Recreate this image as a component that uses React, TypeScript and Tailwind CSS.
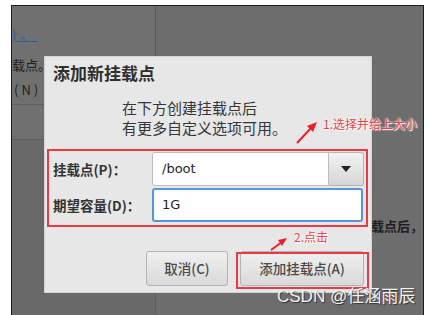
import React from "react";

const ui = { fontFamily: '"DejaVu Sans","Noto Sans CJK SC",sans-serif' };
const cjk = { fontFamily: '"Noto Sans CJK SC","DejaVu Sans",sans-serif' };

export default function App() {
  return (
    <div className="w-[430px] h-[315px] bg-white pt-[5px] pl-[11px] overflow-hidden" style={ui}>
      <div className="relative w-[413px] h-[310px] border-l border-t border-r border-[#1c1c1c] bg-[#6d6d6d] overflow-hidden flex">
        {/* left background column */}
        <div className="w-[146px] h-full border-r border-[#5b5b5b] bg-[#707070] flex flex-col">
          <div className="h-[99px] border-b border-[#5e5e5e] flex flex-col items-start text-[13px] leading-[18px] text-[#1f1f1f]" style={cjk}>
            <div className="mt-[20px] whitespace-nowrap text-[#2a5ca8] underline tracking-[4px]">)。</div>
            <div className="mt-[12px] whitespace-nowrap">载点。</div>
            <div className="mt-[7px] ml-[2px] tracking-[3px] whitespace-nowrap">(N)</div>
          </div>
          <div className="h-[35px] border-b border-[#5e5e5e]" />
          <div className="flex-1 bg-[#696969]" />
        </div>
        {/* right background area */}
        <div className="flex-1 pt-[211px] pl-[202px]">
          <div className="text-[13px] leading-[18px] font-bold text-[#1e1e1e] whitespace-nowrap" style={cjk}>
            挂载点后，
          </div>
        </div>

        {/* dialog window */}
        <div className="absolute left-[32px] top-[50px] w-[328px] h-[237px] bg-[#e7e7e7] border border-[#d2d2d2] flex flex-col">
          <div className="pl-[8px] pt-[5px] text-[17px] leading-[22px] font-bold text-[#2f2f2f]" style={cjk}>
            添加新挂载点
          </div>
          <div className="mt-[14px] pl-[77px] text-[15px] leading-[20px] text-[#363636]" style={cjk}>
            <div>在下方创建挂载点后</div>
            <div>有更多自定义选项可用。</div>
          </div>
          <div className="mt-[11px] ml-[2px] w-[321px] h-[78px] border-2 border-[#ec3a42] pl-[4px] pt-[1px] grid grid-cols-[99px_212px] gap-y-[2px] content-start">
            <div className="h-[34px] flex items-center text-[13.5px] font-bold text-[#333]" style={cjk}>
              挂载点(P)：
            </div>
            <div className="h-[34px] flex">
              <div className="flex-1 bg-white border border-[#bdbdbd] rounded-l-[3px] flex items-center pl-[9px] text-[13px] text-[#1f1f1f]">
                /boot
              </div>
              <div className="w-[35px] border border-l-0 border-[#b5b5b5] rounded-r-[3px] bg-gradient-to-b from-[#f2f2f2] to-[#d6d6d6] flex items-center justify-center">
                <svg width="10" height="6" viewBox="0 0 10 6">
                  <path d="M0 0 L10 0 L5 6 Z" fill="#222" />
                </svg>
              </div>
            </div>
            <div className="h-[34px] flex items-center text-[13.5px] font-bold text-[#333]" style={cjk}>
              期望容量(D)：
            </div>
            <div className="h-[34px] w-[211px] bg-white border-2 border-[#5796dc] rounded-[3px] flex items-center pl-[8px] text-[13px] text-[#1f1f1f]">
              1G
            </div>
          </div>
          <div className="mt-[24px] pl-[101px] flex gap-[12px]">
            <div className="w-[82px] h-[35px] rounded-[3px] border border-[#b4b4b4] bg-gradient-to-b from-[#f0f0f0] to-[#d9d9d9] flex items-center justify-center text-[13.5px] font-medium text-[#4a4a4a]" style={cjk}>
              取消(C)
            </div>
            <div className="relative w-[124px] h-[35px] rounded-[3px] border border-[#b4b4b4] bg-gradient-to-b from-[#f0f0f0] to-[#d9d9d9] flex items-center justify-center text-[13.5px] font-medium text-[#4a4a4a]" style={cjk}>
              添加挂载点(A)
              <span className="absolute left-[-5px] top-[0px] right-[-6px] bottom-[-4px] border-2 border-[#ec3a42]" />
            </div>
          </div>
        </div>

        {/* annotations */}
        <div
          className="absolute left-[311px] top-[110px] text-[12px] leading-[16px] text-[#f03c44] whitespace-nowrap [text-shadow:0_0_2px_#fff,0_0_2px_#fff,1px_1px_1px_#fff]"
          style={cjk}
        >
          1.选择并给上大小
        </div>
        <svg className="absolute left-[280px] top-[112px]" width="30" height="30" viewBox="0 0 30 30">
          <line x1="5" y1="25" x2="20" y2="9" stroke="#e8202a" strokeWidth="2" />
          <path d="M25 4 L15 8 L21 14 Z" fill="#e8202a" />
        </svg>
        <div
          className="absolute left-[282px] top-[223px] text-[12px] leading-[16px] text-[#f03c44] whitespace-nowrap [text-shadow:0_0_2px_#fff,0_0_2px_#fff,1px_1px_1px_#fff]"
          style={cjk}
        >
          2.点击
        </div>
        <svg className="absolute left-[256px] top-[229px]" width="22" height="18" viewBox="0 0 22 18">
          <line x1="3" y1="15" x2="14" y2="7" stroke="#e8202a" strokeWidth="2" />
          <path d="M19 3 L10 5 L14 11 Z" fill="#e8202a" />
        </svg>
        <div
          className="absolute left-[265px] top-[280px] text-[17px] leading-[22px] text-[#f2f2f2] whitespace-nowrap [text-shadow:1px_1px_1px_rgba(0,0,0,0.55)]"
          style={{ fontFamily: '"Liberation Sans","Noto Sans CJK SC",sans-serif' }}
        >
          CSDN @任涵雨辰
        </div>
      </div>
    </div>
  );
}
